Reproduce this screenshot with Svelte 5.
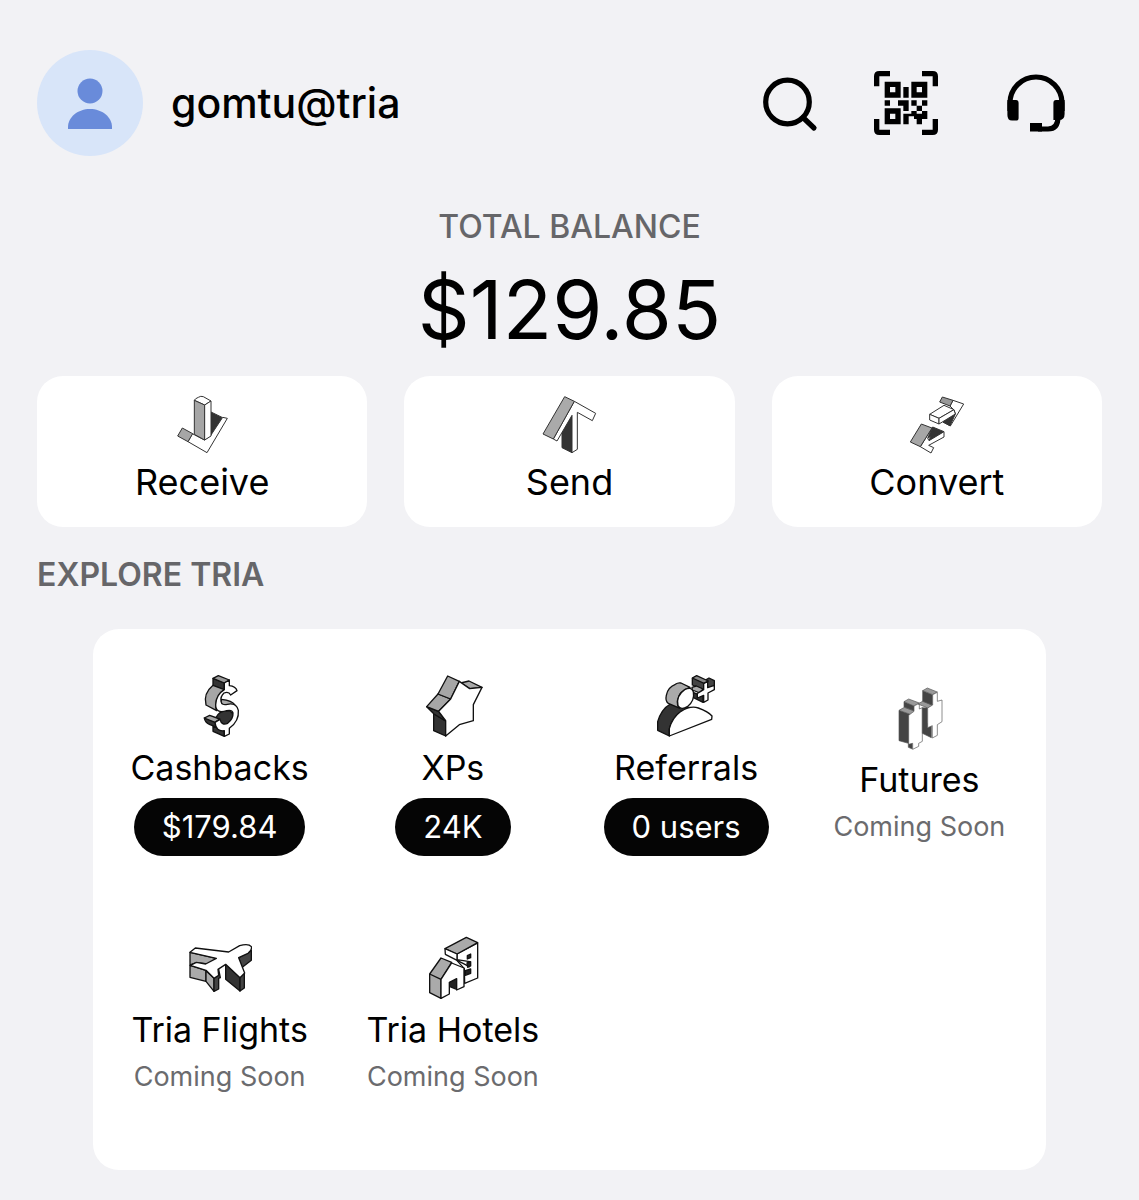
<script lang="ts">
    type Shape = [fill: string, d: string];

    type Icon = {
        box: string;
        line: string;
        width: number;
        shapes: Shape[];
    };

    type Tile = {
        name: string;
        icon: string;
        badge?: string;
    };

    const icons: Record<string, Icon> = {
        receive: {
            box: '30 18 192 192', line: '#333', width: 3,
            shapes: [
                ['#333', 'M151 77 L188 95 L151 151Z'],
                ['#fff', 'M133 162 L151 150 L188 94 L202 97 L141 200 L84 167 L97 143Z'],
                ['#a6a6a6', 'M67 126 L98 143 L84 167 L53 150Z'],
                ['#fff', 'M103 43 Q105 38 115 34 Q122 29 130 32 L153 45 L134 57Z'],
                ['#a6a6a6', 'M103 43 L134 57 V162 L103 145Z'],
                ['#fff', 'M134 57 L153 45 V150 L134 162Z']
            ]
        },
        send: {
            box: '21 18 192 192', line: '#333', width: 3,
            shapes: [
                ['#333', 'M96 135 L126 88 V200 L96 185Z'],
                ['#fff', 'M133 46 L197 82 L187 104 L142 79 V190 L126 200 V88 L81 165 L70 159Z'],
                ['#aaa', 'M104 32 L133 46 L70 159 L39 144Z']
            ]
        },
        convert: {
            box: '30 18 192 192', line: '#333', width: 3,
            shapes: [
                ['#fff', 'M174 43 L206 54 L166 120 L144 108 L181 83 L177 72 L165 60Z'],
                ['#333', 'M181 84 L165 119 L144 108Z'],
                ['#999', 'M142 33 L174 43 L165 60 L134 48Z'],
                ['#fff', 'M104 85 L147 58 L177 71 L132 97Z'],
                ['#fff', 'M104 85 L132 97 V114 L104 102Z'],
                ['#fff', 'M132 97 L177 71 L181 84 L132 114Z'],
                ['#333', 'M113 123 L147 137 L102 164 L107 151 L98 157Z'],
                ['#fff', 'M147 137 V153 L101 178 L116 185 L108 201 L76 182 L111 126 L98 157 L102 164Z'],
                ['#a6a6a6', 'M79 114 L111 126 L76 182 L46 168Z']
            ]
        },
        cashback: {
            box: '-6 27 192 192', line: '#111', width: 4,
            shapes: [
                ['#333', 'M69 40 L103 54 V75 L69 62Z'],
                ['#999', 'M69 40 L85 32 L118 45 L103 54Z'],
                ['#a6a6a6', 'M69 61 L103 74 Q78 91 77 126 L80 137 L48 120 Q39 86 69 61Z'],
                ['#aaa', 'M94 103 Q127 107 134 119 L112 120 Q101 124 91 125Z'],
                ['#333', 'M77 159 Q87 138 110 137 Q133 137 129 164 Q116 181 98 177Z'],
                ['#333', 'M69 183 L103 195 V214 L69 199Z'],
                ['#333', 'M43 159 L75 171 L83 188 L58 178 Q45 173 43 159Z'],
                ['#a6a6a6', 'M43 159 L59 151 L89 162 L75 172Z'],
                ['#fff', 'M103 54 L118 45 V62 Q137 64 141 77 L122 90 Q116 78 102 84 Q91 94 93 109 Q95 122 112 118 Q139 112 145 136 Q148 168 118 190 V207 L103 214 V197 Q78 201 75 172 L90 163 Q95 183 113 175 Q130 161 129 144 Q126 133 110 137 Q77 147 77 119 Q78 89 103 74Z']
            ]
        },
        star: {
            box: '18 27 192 192', line: '#111', width: 4,
            shapes: [
                ['#333', 'M56 146 L92 168 V213 L56 197Z'],
                ['#333', 'M35 125 L71 139 L92 168 L57 147Z'],
                ['#a6a6a6', 'M69 87 L107 102 L71 139 L35 125Z'],
                ['#a6a6a6', 'M98 33 L133 49 L107 102 L69 87Z'],
                ['#aaa', 'M137 54 L162 48 L201 67 L164 71Z'],
                ['#fff', 'M133 49 L164 71 L201 67 L175 119 V167 L133 179 L92 213 V167 L71 139 L107 102Z']
            ]
        },
        referral: {
            box: '27 27 192 192', line: '#111', width: 4,
            shapes: [
                ['#444', 'M142 40 L154 34 L180 46 L192 39 L208 47 V63 L190 72 L180 68 L174 72 L142 60Z'],
                ['#888', 'M142 39 L155 32 L190 48 L177 55Z'],
                ['#aaa', 'M141 67 L154 63 L174 72 L165 84 L142 75Z'],
                ['#333', 'M144 82 L174 94 V112 L144 97Z'],
                ['#fff', 'M176 56 L188 49 V68 L208 61 V74 L189 84 V105 L176 112 V91 L157 99 V85 L176 74Z'],
                ['#333', 'M38 196 V170 Q49 132 76 117 Q87 115 98 122 L137 128 L108 139 Q78 163 73 193 V213Z'],
                ['#fff', 'M73 213 V191 Q82 158 108 139 Q137 121 160 129 Q190 140 201 153 L200 163Z'],
                ['#aaa', 'M91 58 Q68 67 64 91 Q60 108 70 115 L105 130 Q94 122 98 104 Q105 76 135 67 L108 54 Q99 52 91 58Z'],
                ['#fff', 'M119 74 Q139 63 145 80 Q150 108 127 125 Q108 137 99 122 Q92 93 119 74Z']
            ]
        },
        futures: {
            box: '6 18 192 192', line: '#555', width: 2,
            shapes: [
                ['#444', 'M42 91 L82 105 V207 L70 202 V190 L42 182Z'],
                ['#999', 'M42 91 L58 82 L97 96 L82 105Z'],
                ['#444', 'M57 65 L87 77 V92 L57 81Z'],
                ['#999', 'M57 65 L71 57 L103 69 L87 78Z'],
                ['#fff', 'M87 78 L103 70 V87 L112 83 V184 L101 190 V199 L83 208 V190 L71 193 V106 L87 94Z'],
                ['#999', 'M99 72 L114 63 L143 76 L128 84Z'],
                ['#444', 'M112 83 L128 84 V129 L139 133 V173 L112 160Z'],
                ['#444', 'M113 32 L143 44 V76 L113 64Z'],
                ['#999', 'M113 32 L127 24 L157 36 L143 44Z'],
                ['#fff', 'M143 44 L157 37 V64 L171 60 V125 L157 134 V166 L142 174 V137 L128 143 V84 L143 75Z']
            ]
        },
        flight: {
            box: '24 18 192 192', line: '#111', width: 4,
            shapes: [
                ['#aaa', 'M30 67 L109 85 L97 103 L50 98 L30 105Z'],
                ['#aaa', 'M30 106 L78 121 V154 L30 142Z'],
                ['#aaa', 'M78 122 L102 145 V184 L78 154Z'],
                ['#444', 'M102 145 L115 114 L121 143 L116 145 V177 L102 184Z'],
                ['#333', 'M137 103 L180 142 V183 L137 148Z'],
                ['#444', 'M180 142 L193 129 V174 L180 183Z'],
                ['#444', 'M176 83 L214 61 V91 L185 113Z'],
                ['#fff', 'M30 67 L46 54 L146 66 L179 47 Q206 40 214 50 Q217 60 204 70 L176 83 L194 129 L180 143 L137 103 L114 118 L116 136 L102 145 L78 121 L31 106 L49 97 L77 102 L109 85Z']
            ]
        },
        hotel: {
            box: '18 18 192 192', line: '#111', width: 4,
            shapes: [
                ['#fff', 'M126 72 L188 39 V144 L149 160 L148 116 L126 92Z'],
                ['#aaa', 'M90 56 L154 22 L188 38 L126 72Z'],
                ['#fff', 'M90 56 L126 72 V89 L164 95 L163 110 L91 73Z'],
                ['#222', 'M157 77 L167 72 V83 L157 87Z M156 99 L167 95 V108 L158 112Z M151 122 L167 117 V130 L151 136Z'],
                ['#aaa', 'M44 132 L78 84 L110 97 L78 148 V205 L44 188Z'],
                ['#222', 'M103 156 L125 144 V178 L103 169Z'],
                ['#fff', 'M78 148 L110 99 L147 114 V170 L125 180 V146 L103 157 V192 L78 205Z'],
                ['none', 'M44 132 L78 148']
            ]
        }
    };

    const actions: Tile[] = [
        { name: 'Receive', icon: 'receive' },
        { name: 'Send', icon: 'send' },
        { name: 'Convert', icon: 'convert' }
    ];

    // tiles without a badge are not live yet
    const tiles: Tile[] = [
        { name: 'Cashbacks', icon: 'cashback', badge: '$179.84' },
        { name: 'XPs', icon: 'star', badge: '24K' },
        { name: 'Referrals', icon: 'referral', badge: '0 users' },
        { name: 'Futures', icon: 'futures' },
        { name: 'Tria Flights', icon: 'flight' },
        { name: 'Tria Hotels', icon: 'hotel' }
    ];
</script>

{#snippet blockIcon(name: string)}
    <svg
        class="block-icon"
        viewBox={icons[name].box}
        stroke={icons[name].line}
        stroke-width={icons[name].width}
        stroke-linejoin="round"
        aria-hidden="true"
    >
        {#each icons[name].shapes as [fill, d]}
            <path {fill} {d} />
        {/each}
    </svg>
{/snippet}

<main>
    <header>
        <button class="profile">
            <svg class="avatar" viewBox="0 0 106 106" aria-hidden="true">
                <circle cx="53" cy="53" r="53" fill="#d8e5f9" />
                <circle cx="53" cy="41" r="12.5" fill="#698bda" />
                <path d="M31 79 V77 C31 67 41 59 53 59 S75 67 75 77 V79Z" fill="#698bda" />
            </svg>
            <span>gomtu@tria</span>
        </button>
        <nav>
            <button aria-label="Search">
                <svg viewBox="0 0 64 64" fill="none" stroke="#000" stroke-width="5.2" stroke-linecap="round">
                    <circle cx="30.5" cy="31" r="21.8" />
                    <path d="M46 46.5 L57 57" />
                </svg>
            </button>
            <button aria-label="Scan QR code">
                <svg viewBox="0 0 192 192">
                    <path d="M8 46 V16 Q8 8 16 8 H48 M144 8 H176 Q184 8 184 16 V46 M184 144 V176 Q184 184 176 184 H144 M48 184 H16 Q8 184 8 176 V144" fill="none" stroke="#000" stroke-width="16" />
                    <path fill-rule="evenodd" d="M32 32 H80 V80 H32Z M48 48 V64 H64 V48Z M112 32 H160 V80 H112Z M128 48 V64 H144 V48Z M32 112 H80 V160 H32Z M48 128 V144 H64 V128Z" />
                    <path d="M88 48 H104 V80 H88Z M32 88 H48 V104 H32Z M72 88 H104 V120 H88 V104 H72Z M112 88 H128 V104 H112Z M144 88 H160 V104 H144Z M128 104 H144 V120 H128Z M112 120 H128 V128 H144 V144 H120 V136 H104 V160 H88 V128 H112Z M144 120 H160 V144 H144Z M128 144 H144 V160 H128Z" />
                </svg>
            </button>
            <button aria-label="Support">
                <svg class="wide" viewBox="-13 0 90 64">
                    <path d="M6 40 V32 A26 26 0 0 1 58 32 V40 M54 46 C54 54 51 58 44 58 H34" fill="none" stroke="#000" stroke-width="5.2" />
                    <path d="M3.4 29 H12 Q14.6 29 14.6 32 V47 Q14.6 49.6 12 49.6 H8 Q3.4 49.6 3.4 44Z M60.6 29 H52 Q49.4 29 49.4 32 V49 H55 Q60.6 49 60.6 43Z M26 52 H38 V60.6 H26Z" />
                </svg>
            </button>
        </nav>
    </header>

    <section class="balance">
        <h1>TOTAL BALANCE</h1>
        <p>$129.85</p>
    </section>

    <div class="actions">
        {#each actions as action}
            <button class="action">
                {@render blockIcon(action.icon)}
                <span>{action.name}</span>
            </button>
        {/each}
    </div>

    <section class="explore">
        <h2>EXPLORE TRIA</h2>
        <div class="tiles">
            {#each tiles as tile}
                <button class="tile">
                    {@render blockIcon(tile.icon)}
                    <span class="name">{tile.name}</span>
                    {#if tile.badge}
                        <span class="badge">{tile.badge}</span>
                    {:else}
                        <span class="soon">Coming Soon</span>
                    {/if}
                </button>
            {/each}
        </div>
    </section>
</main>

<style>
    :global(body) {
        background: #f2f2f5;
    }

    main {
        box-sizing: border-box;
        padding: 50px 37px 30px;
        font-family: Inter, 'Liberation Sans', sans-serif;
        color: #000;
    }

    button {
        padding: 0;
        border: none;
        background: none;
        color: inherit;
        font: inherit;
        cursor: pointer;
    }

    svg {
        display: block;
    }

    header {
        display: flex;
        justify-content: space-between;
        align-items: center;
    }

    .profile {
        display: flex;
        align-items: center;
        gap: 28px;
        font-size: 41px;
        font-weight: 500;
    }

    .avatar {
        width: 106px;
        height: 106px;
    }

    nav {
        display: flex;
        gap: 53px;
        padding-right: 21px;
    }

    nav svg {
        width: 64px;
        height: 64px;
    }

    nav .wide {
        width: 90px;
    }

    .balance {
        padding-top: 51px;
        text-align: center;
    }

    h1,
    h2 {
        margin: 0;
        font-size: 32px;
        line-height: 40px;
        font-weight: 500;
        color: #666669;
    }

    .balance p {
        margin: 13px 0 16px;
        font-size: 81px;
        line-height: 100px;
    }

    .actions {
        display: grid;
        grid-template-columns: repeat(3, 1fr);
        gap: 37px;
    }

    .action {
        display: flex;
        flex-direction: column;
        align-items: center;
        gap: 4px;
        padding: 16px 16px 23px;
        border-radius: 26px;
        background: #fff;
        font-size: 36px;
        line-height: 44px;
    }

    .block-icon {
        width: 64px;
        height: 64px;
    }

    .explore {
        padding-top: 28px;
    }

    h2 {
        font-weight: 600;
    }

    .tiles {
        display: grid;
        grid-template-columns: repeat(4, 1fr);
        align-items: center;
        row-gap: 80px;
        margin: 34px 56px 0;
        padding: 45px 10px 76px;
        border-radius: 26px;
        background: #fff;
    }

    .tile {
        display: flex;
        flex-direction: column;
        align-items: center;
        gap: 8px;
    }

    .name {
        font-size: 34px;
        line-height: 44px;
    }

    .badge {
        padding: 0 28px;
        border-radius: 29px;
        background: #050505;
        color: #fff;
        font-size: 31px;
        line-height: 58px;
    }

    .soon {
        color: #6b6b6e;
        font-size: 27px;
        line-height: 34px;
    }
</style>
